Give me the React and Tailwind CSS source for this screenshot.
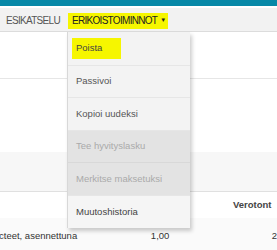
export default function App() {
  return (
    <div className="relative h-[250px] w-[277px] overflow-hidden bg-white font-['Liberation_Sans',Arial,sans-serif] text-[9.5px]">
      <div className="h-[6px] bg-[#0788a7]" />
      <div className="h-[2px] bg-white" />
      {/* toolbar */}
      <div className="flex h-[24px] items-center border-b border-[#dcdcdc] bg-[#f2f2f2] pt-[2px] text-[10px] tracking-[-0.7px]">
        <span className="ml-[6px] text-[#555]">ESIKATSELU</span>
        <span className="ml-[8px] flex h-[16px] items-center bg-[#f6f600] pl-[4px] pr-[2px] text-[#222]">
          ERIKOISTOIMINNOT
          <span className="ml-[3px] text-[6px]">▼</span>
        </span>
      </div>

      {/* page behind the menu */}
      <div className="h-[46px]" />
      <div className="h-px bg-[#e6e6e6]" />
      <div className="h-[73px]" />
      <div className="h-[40px] border-b border-[#e0e0e0] bg-[#f7f7f7]" />
      <div className="flex h-[26px] items-center pl-[172px] font-bold text-[#444]">
        <span className="w-[61px]">kkö</span>
        <span className="whitespace-nowrap">Verotont</span>
      </div>
      <div className="flex h-[40px] items-center whitespace-nowrap bg-[#fafafa] pb-[3px] text-[#333]">
        <span className="-ml-[1px] w-[152px]">cteet, asennettuna</span>
        <span className="w-[121px]">1,00</span>
        <span>2</span>
      </div>

      {/* dropdown */}
      <div className="absolute left-[67px] top-[32px] w-[123px] border-l border-[#d8d8d8] bg-[#f3f3f3] shadow-[2px_3px_4px_rgba(0,0,0,0.2)]">
        <div className="flex h-[34px] items-center border-b border-[#e6e6e6] pl-[4px]">
          <span className="bg-[#f6f600] py-[3px] pl-[4px] pr-[19px] text-[#444]">Poista</span>
        </div>
        <div className="flex h-[32px] items-center border-b border-[#e6e6e6] pl-[8px] text-[#555]">Passivoi</div>
        <div className="flex h-[33px] items-center border-b border-[#e6e6e6] pl-[8px] text-[#555]">Kopioi uudeksi</div>
        <div className="flex h-[32px] items-center border-b border-[#d8d8d8] bg-[#e3e3e3] pl-[8px] text-[#aaa]">Tee hyvityslasku</div>
        <div className="flex h-[33px] items-center border-b border-[#e6e6e6] bg-[#e3e3e3] pl-[8px] text-[#aaa]">Merkitse maksetuksi</div>
        <div className="flex h-[32px] items-center bg-[#f5f5f5] pl-[8px] text-[#444]">Muutoshistoria</div>
      </div>
    </div>
  );
}
